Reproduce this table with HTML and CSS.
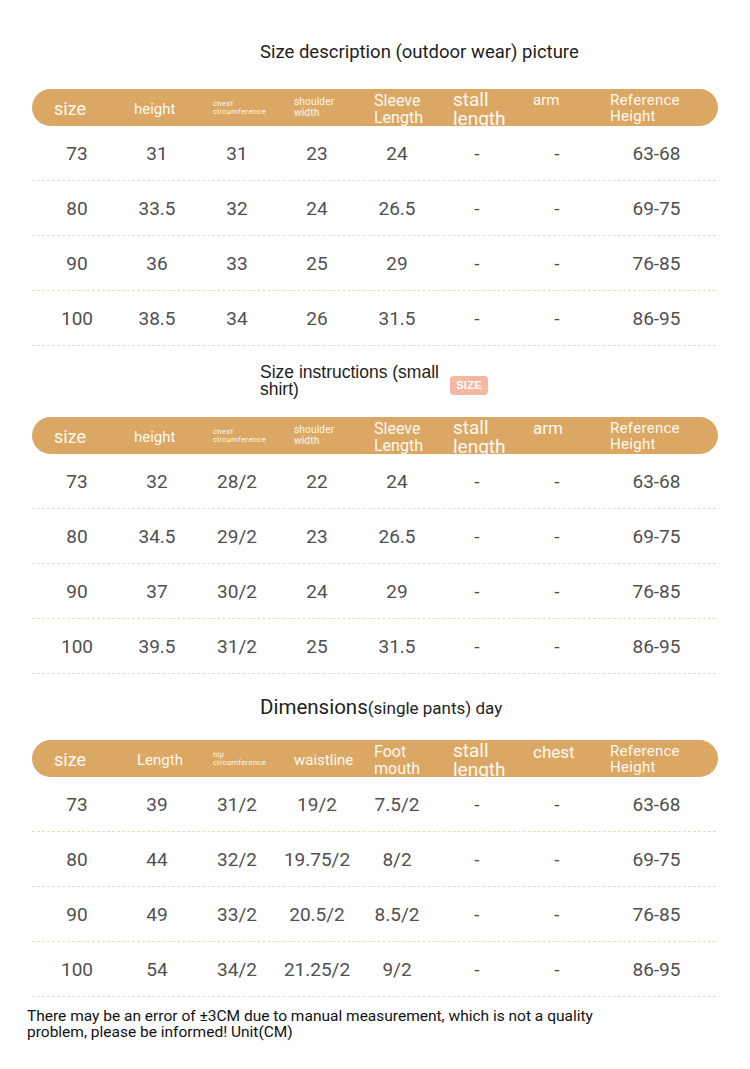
FILE: index.html
```html
<!DOCTYPE html>
<html>
<head>
<meta charset="utf-8">
<link rel="stylesheet" href="styles.css">
</head>
<body>
<div class="page">
  <section class="sec sec1">
    <div class="title t1">Size description (outdoor wear) picture</div>
    <div class="band">
      <div class="hc h-size">size</div>
      <div class="hc h-md">height</div>
      <div class="hc h-tiny">chest<br>circumference</div>
      <div class="hc h-sm">shoulder<br>width</div>
      <div class="hc h-two">Sleeve<br>Length</div>
      <div class="hc h-stall">stall<br>length</div>
      <div class="hc h-top">arm</div>
      <div class="hc h-ref">Reference<br>Height</div>
    </div>
    <div class="row"><span>73</span><span>31</span><span>31</span><span>23</span><span>24</span><span>-</span><span>-</span><span>63-68</span></div>
    <div class="row"><span>80</span><span>33.5</span><span>32</span><span>24</span><span>26.5</span><span>-</span><span>-</span><span>69-75</span></div>
    <div class="row"><span>90</span><span>36</span><span>33</span><span>25</span><span>29</span><span>-</span><span>-</span><span>76-85</span></div>
    <div class="row"><span>100</span><span>38.5</span><span>34</span><span>26</span><span>31.5</span><span>-</span><span>-</span><span>86-95</span></div>
  </section>

  <section class="sec sec2">
    <div class="title-wrap">
      <div class="title t2">Size instructions (small shirt)</div>
      <div class="badge">SIZE</div>
    </div>
    <div class="band">
      <div class="hc h-size">size</div>
      <div class="hc h-md">height</div>
      <div class="hc h-tiny">chest<br>circumference</div>
      <div class="hc h-sm">shoulder<br>width</div>
      <div class="hc h-two">Sleeve<br>Length</div>
      <div class="hc h-stall">stall<br>length</div>
      <div class="hc h-top h-arm2">arm</div>
      <div class="hc h-ref">Reference<br>Height</div>
    </div>
    <div class="row"><span>73</span><span>32</span><span>28/2</span><span>22</span><span>24</span><span>-</span><span>-</span><span>63-68</span></div>
    <div class="row"><span>80</span><span>34.5</span><span>29/2</span><span>23</span><span>26.5</span><span>-</span><span>-</span><span>69-75</span></div>
    <div class="row"><span>90</span><span>37</span><span>30/2</span><span>24</span><span>29</span><span>-</span><span>-</span><span>76-85</span></div>
    <div class="row"><span>100</span><span>39.5</span><span>31/2</span><span>25</span><span>31.5</span><span>-</span><span>-</span><span>86-95</span></div>
  </section>

  <section class="sec sec3">
    <div class="title t3"><span class="big">Dimensions</span>(single pants) day</div>
    <div class="band">
      <div class="hc h-size">size</div>
      <div class="hc h-md h-len">Length</div>
      <div class="hc h-tiny">hip<br>circumference</div>
      <div class="hc h-md">waistline</div>
      <div class="hc h-two h-foot">Foot<br>mouth</div>
      <div class="hc h-stall">stall<br>length</div>
      <div class="hc h-top h-chest">chest</div>
      <div class="hc h-ref">Reference<br>Height</div>
    </div>
    <div class="row"><span>73</span><span>39</span><span>31/2</span><span>19/2</span><span>7.5/2</span><span>-</span><span>-</span><span>63-68</span></div>
    <div class="row"><span>80</span><span>44</span><span>32/2</span><span>19.75/2</span><span>8/2</span><span>-</span><span>-</span><span>69-75</span></div>
    <div class="row"><span>90</span><span>49</span><span>33/2</span><span>20.5/2</span><span>8.5/2</span><span>-</span><span>-</span><span>76-85</span></div>
    <div class="row"><span>100</span><span>54</span><span>34/2</span><span>21.25/2</span><span>9/2</span><span>-</span><span>-</span><span>86-95</span></div>
  </section>

  <p class="note">There may be an error of ±3CM due to manual measurement, which is not a quality problem, please be informed! Unit(CM)</p>
</div>
</body>
</html>
```

FILE: styles.css
```css
html, body {
  margin: 0;
  padding: 0;
  background: #ffffff;
}

.page {
  width: 750px;
  height: 1069px;
  overflow: hidden;
  font-family: Roboto, "Liberation Sans", sans-serif;
  color: #222;
}

.sec {
  display: flex;
  flex-direction: column;
}

.title {
  padding-left: 260px;
  color: #1e1e1e;
}

.t1 {
  margin-top: 41px;
  font-size: 18.5px;
  line-height: 22px;
  height: 22px;
}

.title-wrap {
  display: flex;
  align-items: flex-start;
  margin-top: 18px;
  padding-left: 260px;
  gap: 8px;
}

.t2 {
  padding-left: 0;
  width: 182px;
  font-family: "Liberation Sans", Arial, sans-serif;
  font-size: 17.5px;
  line-height: 17px;
}

.badge {
  margin-top: 12px;
  width: 38px;
  height: 19px;
  border-radius: 4px;
  background: #f4b7a2;
  color: #fff;
  font-family: "Liberation Sans", Arial, sans-serif;
  font-weight: bold;
  font-size: 11px;
  line-height: 19px;
  text-align: center;
  letter-spacing: 0.3px;
}

.t3 {
  margin-top: 22px;
  font-size: 17px;
  line-height: 22px;
  height: 22px;
}

.t3 .big {
  font-size: 20.5px;
}

.band {
  margin: 0 32px;
  height: 37px;
  border-radius: 19px;
  background: #dba764;
  display: grid;
  grid-template-columns: repeat(7, 80px) 1fr;
  padding-left: 5px;
  overflow: hidden;
  color: #fff9ef;
}

.sec1 .band { margin-top: 26px; }
.sec2 .band { margin-top: 19px; }
.sec3 .band { margin-top: 22px; }

.hc {
  padding-left: 17px;
  align-self: center;
  white-space: nowrap;
}

.h-size {
  font-size: 18px;
  line-height: 20px;
}

.h-md {
  font-size: 15px;
  line-height: 18px;
}

.h-len { padding-left: 20px; }

.h-tiny {
  font-size: 7.5px;
  line-height: 8px;
  letter-spacing: 0.4px;
  padding-left: 16px;
  margin-top: -2px;
}

.h-sm {
  font-size: 10px;
  line-height: 11px;
  letter-spacing: 0.2px;
  margin-top: -4px;
}

.h-two {
  font-size: 16px;
  line-height: 17px;
}

.h-stall {
  font-size: 19px;
  line-height: 19px;
  align-self: start;
  padding-top: 1px;
  padding-left: 16px;
}

.h-top {
  align-self: start;
  font-size: 15px;
  line-height: 18px;
  padding-top: 2px;
  padding-left: 16px;
}

.h-arm2 { font-size: 17px; }
.h-chest { font-size: 17px; padding-top: 3px; }

.h-ref {
  font-size: 15px;
  line-height: 16px;
  padding-left: 13px;
  margin-top: -2px;
  letter-spacing: 0.3px;
}

.row {
  margin: 0 34px 0 32px;
  height: 54px;
  border-bottom: 1px dashed #e3dfc4;
  display: grid;
  grid-template-columns: repeat(7, 80px) 1fr;
  padding-left: 5px;
  align-items: center;
  font-size: 19px;
  color: #505050;
}

.row span {
  text-align: center;
}

.note {
  margin: 11px 0 0 27px;
  width: 585px;
  font-family: Roboto, "Liberation Sans", sans-serif;
  font-size: 15.5px;
  line-height: 16px;
  color: #111;
}
```
